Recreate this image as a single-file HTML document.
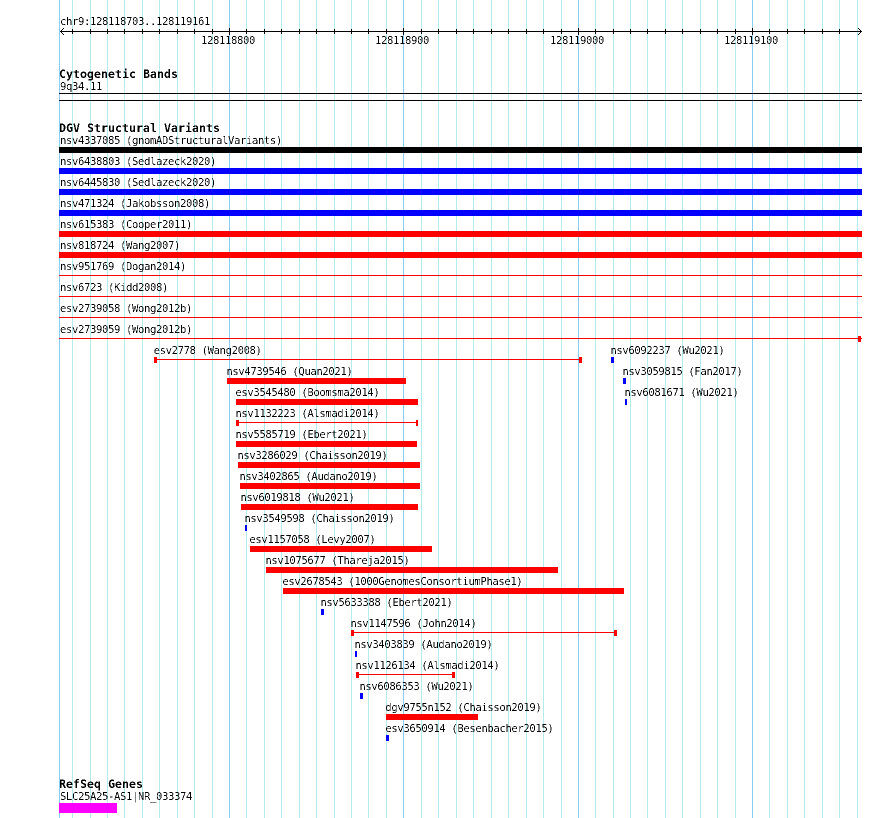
<!DOCTYPE html>
<html><head><meta charset="utf-8"><title>chr9:128118703..128119161</title>
<style>
html,body{margin:0;padding:0;background:#fff;width:890px;height:818px;overflow:hidden}
svg{display:block;position:absolute;left:0;top:0}
text{font-family:"DejaVu Sans Mono","Liberation Mono",monospace;font-size:10.6px;letter-spacing:-.38px;fill:#000;white-space:pre}
text.b{font-weight:bold;font-size:11.63px;letter-spacing:0}
.g{fill:#b2ecf0}.m{fill:#88cdf2}.r{fill:#f00}.u{fill:#00f}.k{fill:#000}
</style></head><body>
<svg width="890" height="818" viewBox="0 0 890 818" shape-rendering="crispEdges">
<defs><filter id="a" x="0" y="0" width="890" height="818" filterUnits="userSpaceOnUse" color-interpolation-filters="sRGB"><feComponentTransfer><feFuncA type="discrete" tableValues="0 0 0 1 1"/></feComponentTransfer></filter></defs>
<g class="g">
<rect x="72" y="0" width="1" height="818"/><rect x="90" y="0" width="1" height="818"/><rect x="107" y="0" width="1" height="818"/><rect x="124" y="0" width="1" height="818"/><rect x="142" y="0" width="1" height="818"/><rect x="159" y="0" width="1" height="818"/><rect x="177" y="0" width="1" height="818"/><rect x="194" y="0" width="1" height="818"/><rect x="212" y="0" width="1" height="818"/>
<rect x="246" y="0" width="1" height="818"/><rect x="264" y="0" width="1" height="818"/><rect x="281" y="0" width="1" height="818"/><rect x="299" y="0" width="1" height="818"/><rect x="316" y="0" width="1" height="818"/><rect x="334" y="0" width="1" height="818"/><rect x="351" y="0" width="1" height="818"/><rect x="368" y="0" width="1" height="818"/><rect x="386" y="0" width="1" height="818"/>
<rect x="421" y="0" width="1" height="818"/><rect x="438" y="0" width="1" height="818"/><rect x="456" y="0" width="1" height="818"/><rect x="473" y="0" width="1" height="818"/><rect x="491" y="0" width="1" height="818"/><rect x="508" y="0" width="1" height="818"/><rect x="526" y="0" width="1" height="818"/><rect x="543" y="0" width="1" height="818"/><rect x="561" y="0" width="1" height="818"/>
<rect x="595" y="0" width="1" height="818"/><rect x="613" y="0" width="1" height="818"/><rect x="630" y="0" width="1" height="818"/><rect x="647" y="0" width="1" height="818"/><rect x="665" y="0" width="1" height="818"/><rect x="682" y="0" width="1" height="818"/><rect x="700" y="0" width="1" height="818"/><rect x="717" y="0" width="1" height="818"/><rect x="735" y="0" width="1" height="818"/>
<rect x="769" y="0" width="1" height="818"/><rect x="787" y="0" width="1" height="818"/><rect x="804" y="0" width="1" height="818"/><rect x="822" y="0" width="1" height="818"/><rect x="839" y="0" width="1" height="818"/><rect x="857" y="0" width="1" height="818"/>
</g>
<g class="m"><rect x="59" y="0" width="1" height="818"/><rect x="229" y="0" width="1" height="818"/><rect x="403" y="0" width="1" height="818"/><rect x="578" y="0" width="1" height="818"/><rect x="752" y="0" width="1" height="818"/></g>

<!-- axis -->
<g class="k">
<rect x="60" y="31" width="802" height="1"/>
<rect x="72" y="29" width="1" height="5"/><rect x="90" y="29" width="1" height="5"/><rect x="107" y="29" width="1" height="5"/><rect x="124" y="29" width="1" height="5"/><rect x="142" y="29" width="1" height="5"/><rect x="159" y="29" width="1" height="5"/><rect x="177" y="29" width="1" height="5"/><rect x="194" y="29" width="1" height="5"/><rect x="212" y="29" width="1" height="5"/><rect x="229" y="28" width="1" height="7"/>
<rect x="246" y="29" width="1" height="5"/><rect x="264" y="29" width="1" height="5"/><rect x="281" y="29" width="1" height="5"/><rect x="299" y="29" width="1" height="5"/><rect x="316" y="29" width="1" height="5"/><rect x="334" y="29" width="1" height="5"/><rect x="351" y="29" width="1" height="5"/><rect x="368" y="29" width="1" height="5"/><rect x="386" y="29" width="1" height="5"/><rect x="403" y="28" width="1" height="7"/>
<rect x="421" y="29" width="1" height="5"/><rect x="438" y="29" width="1" height="5"/><rect x="456" y="29" width="1" height="5"/><rect x="473" y="29" width="1" height="5"/><rect x="491" y="29" width="1" height="5"/><rect x="508" y="29" width="1" height="5"/><rect x="526" y="29" width="1" height="5"/><rect x="543" y="29" width="1" height="5"/><rect x="561" y="29" width="1" height="5"/><rect x="578" y="28" width="1" height="7"/>
<rect x="595" y="29" width="1" height="5"/><rect x="613" y="29" width="1" height="5"/><rect x="630" y="29" width="1" height="5"/><rect x="647" y="29" width="1" height="5"/><rect x="665" y="29" width="1" height="5"/><rect x="682" y="29" width="1" height="5"/><rect x="700" y="29" width="1" height="5"/><rect x="717" y="29" width="1" height="5"/><rect x="735" y="29" width="1" height="5"/><rect x="752" y="28" width="1" height="7"/>
<rect x="769" y="29" width="1" height="5"/><rect x="787" y="29" width="1" height="5"/><rect x="804" y="29" width="1" height="5"/><rect x="822" y="29" width="1" height="5"/><rect x="839" y="29" width="1" height="5"/>
<rect x="63" y="28" width="1" height="1"/><rect x="62" y="29" width="1" height="1"/><rect x="61" y="30" width="1" height="1"/><rect x="61" y="32" width="1" height="1"/><rect x="62" y="33" width="1" height="1"/><rect x="63" y="34" width="1" height="1"/>
<rect x="858" y="28" width="1" height="1"/><rect x="859" y="29" width="1" height="1"/><rect x="860" y="30" width="1" height="1"/><rect x="860" y="32" width="1" height="1"/><rect x="859" y="33" width="1" height="1"/><rect x="858" y="34" width="1" height="1"/>
<rect x="59" y="93" width="803" height="1"/><rect x="59" y="100" width="803" height="1"/>
<rect x="59" y="147" width="803" height="6"/>
</g>

<!-- full-width rows -->
<g class="u"><rect x="59" y="168" width="803" height="6"/><rect x="59" y="189" width="803" height="6"/><rect x="59" y="210" width="803" height="6"/></g>
<g class="r"><rect x="59" y="231" width="803" height="6"/><rect x="59" y="252" width="803" height="6"/>
<rect x="59" y="275" width="803" height="1"/><rect x="59" y="296" width="803" height="1"/><rect x="59" y="317" width="803" height="1"/><rect x="59" y="338" width="803" height="1"/><rect x="858" y="336" width="3" height="6"/>

<rect x="154" y="357" width="3" height="6"/><rect x="157" y="359" width="423" height="1"/><rect x="579" y="357" width="3" height="6"/>
<rect x="227" y="378" width="179" height="6"/>
<rect x="236" y="399" width="182" height="6"/>
<rect x="236" y="420" width="3" height="6"/><rect x="239" y="422" width="178" height="1"/><rect x="416" y="420" width="2" height="6"/>
<rect x="236" y="441" width="181" height="6"/>
<rect x="238" y="462" width="182" height="6"/>
<rect x="240" y="483" width="180" height="6"/>
<rect x="241" y="504" width="177" height="6"/>
<rect x="250" y="546" width="182" height="6"/>
<rect x="266" y="567" width="292" height="6"/>
<rect x="283" y="588" width="341" height="6"/>
<rect x="351" y="630" width="3" height="6"/><rect x="354" y="632" width="261" height="1"/><rect x="614" y="630" width="3" height="6"/>
<rect x="356" y="672" width="3" height="6"/><rect x="359" y="674" width="94" height="1"/><rect x="452" y="672" width="3" height="6"/>
<rect x="386" y="714" width="92" height="6"/>
</g>
<g class="u">
<rect x="611" y="357" width="3" height="6"/><rect x="623" y="378" width="3" height="6"/><rect x="625" y="399" width="2" height="6"/>
<rect x="245" y="525" width="2" height="6"/><rect x="321" y="609" width="3" height="6"/><rect x="355" y="651" width="2" height="6"/><rect x="360" y="693" width="3" height="6"/><rect x="386" y="735" width="3" height="6"/>
</g>
<rect x="59" y="803" width="58" height="10" fill="#f0f"/>

<g filter="url(#a)" shape-rendering="auto">
<text x="60" y="25">chr9:128118703..128119161</text>
<text x="201" y="44">128118800</text>
<text x="375" y="44">128118900</text>
<text x="550" y="44">128119000</text>
<text x="724" y="44">128119100</text>
<text class="b" x="59" y="78">Cytogenetic Bands</text>
<text x="60" y="90">9q34.11</text>
<text class="b" x="59" y="132">DGV Structural Variants</text>
<text x="60" y="144">nsv4337085 (gnomADStructuralVariants)</text>
<text x="60" y="165">nsv6438803 (Sedlazeck2020)</text>
<text x="60" y="186">nsv6445830 (Sedlazeck2020)</text>
<text x="60" y="207">nsv471324 (Jakobsson2008)</text>
<text x="60" y="228">nsv615383 (Cooper2011)</text>
<text x="60" y="249">nsv818724 (Wang2007)</text>
<text x="60" y="270">nsv951769 (Dogan2014)</text>
<text x="60" y="291">nsv6723 (Kidd2008)</text>
<text x="60" y="312">esv2739058 (Wong2012b)</text>
<text x="60" y="333">esv2739059 (Wong2012b)</text>
<text x="153.6" y="354">esv2778 (Wang2008)</text>
<text x="610.4" y="354">nsv6092237 (Wu2021)</text>
<text x="226.4" y="375">nsv4739546 (Quan2021)</text>
<text x="622.4" y="375">nsv3059815 (Fan2017)</text>
<text x="235.4" y="396">esv3545480 (Boomsma2014)</text>
<text x="624.4" y="396">nsv6081671 (Wu2021)</text>
<text x="235.4" y="417">nsv1132223 (Alsmadi2014)</text>
<text x="235.4" y="438">nsv5585719 (Ebert2021)</text>
<text x="237.4" y="459">nsv3286029 (Chaisson2019)</text>
<text x="239.4" y="480">nsv3402865 (Audano2019)</text>
<text x="240.4" y="501">nsv6019818 (Wu2021)</text>
<text x="244.4" y="522">nsv3549598 (Chaisson2019)</text>
<text x="249.4" y="543">esv1157058 (Levy2007)</text>
<text x="265.4" y="564">nsv1075677 (Thareja2015)</text>
<text x="282.4" y="585">esv2678543 (1000GenomesConsortiumPhase1)</text>
<text x="320.4" y="606">nsv5633388 (Ebert2021)</text>
<text x="350.4" y="627">nsv1147596 (John2014)</text>
<text x="354.4" y="648">nsv3403839 (Audano2019)</text>
<text x="355.4" y="669">nsv1126134 (Alsmadi2014)</text>
<text x="359.4" y="690">nsv6086353 (Wu2021)</text>
<text x="385.4" y="711">dgv9755n152 (Chaisson2019)</text>
<text x="385.4" y="732">esv3650914 (Besenbacher2015)</text>
<text class="b" x="59" y="788">RefSeq Genes</text>
<text x="60" y="800">SLC25A25-AS1|NR_033374</text>
</g>
</svg>
</body></html>
